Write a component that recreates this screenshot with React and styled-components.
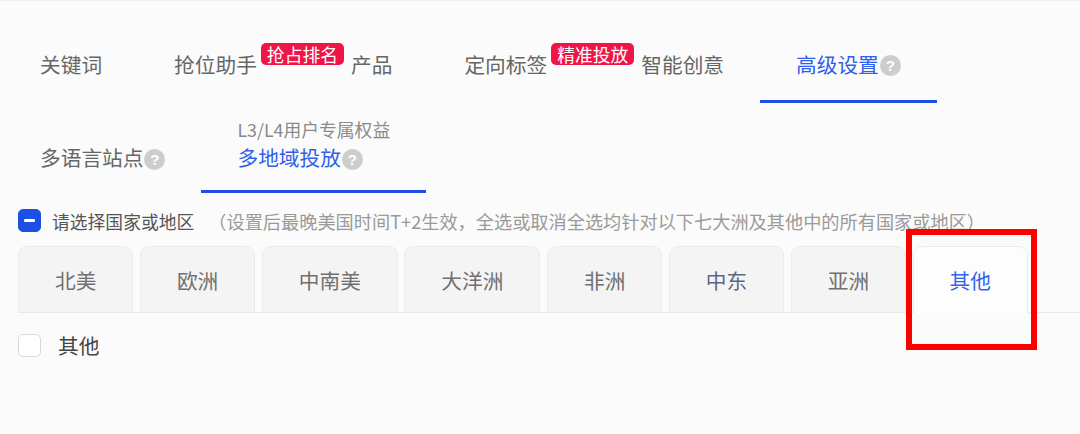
import styled, { createGlobalStyle } from 'styled-components';

const GlobalStyle = createGlobalStyle`
  body {
    margin: 0;
    background: #fbfbfb;
    font-family: "Noto Sans CJK SC", "Noto Sans", sans-serif;
  }
`;

const mainTabs = [
  { label: '关键词' },
  { label: '抢位助手', badge: '抢占排名', tail: '产品' },
  { label: '定向标签', badge: '精准投放', tail: '智能创意' },
  { label: '高级设置', help: true, active: true },
];

const regions = ['北美', '欧洲', '中南美', '大洋洲', '非洲', '中东', '亚洲', '其他'];

const Help = () => <HelpIcon>?</HelpIcon>;

const App = () => {
  return (
    <Page>
      <GlobalStyle />
      <TabBar>
        {mainTabs.map((t) => (
          <Tab key={t.label} $active={t.active}>
            {t.label}
            {t.badge && <Badge>{t.badge}</Badge>}
            {t.tail}
            {t.help && <Help />}
          </Tab>
        ))}
      </TabBar>
      <SubTabBar>
        <SubTab>
          <SubMain>
            多语言站点
            <Help />
          </SubMain>
        </SubTab>
        <SubTab $active>
          <SubLabel>L3/L4用户专属权益</SubLabel>
          <SubMain $active>
            多地域投放
            <Help />
          </SubMain>
        </SubTab>
      </SubTabBar>
      <Content>
        <CheckRow>
          <Checkbox $indeterminate>
            <Dash />
          </Checkbox>
          <CheckTitle>请选择国家或地区</CheckTitle>
          <Note>（设置后最晚美国时间T+2生效，全选或取消全选均针对以下七大洲及其他中的所有国家或地区）</Note>
        </CheckRow>
        <CardRow>
          {regions.map((r) => (
            <Card key={r} $active={r === '其他'} $hover={r === '中东'}>
              {r}
              {r === '其他' && <Highlight />}
            </Card>
          ))}
        </CardRow>
        <OptionRow>
          <Checkbox />
          <OptionText>其他</OptionText>
        </OptionRow>
      </Content>
    </Page>
  );
};

const Page = styled.div`
  min-height: 434px;
  box-sizing: border-box;
  border-top: 1px solid #efefef;
  padding-top: 30px;
`;

const TabBar = styled.div`
  display: flex;
  padding-left: 4px;
`;

const Tab = styled.div`
  display: flex;
  align-items: center;
  box-sizing: border-box;
  height: 72px;
  padding: 0 36px 4px;
  font-size: 20.7px;
  color: ${(p) => (p.$active ? '#2f5fec' : '#666')};
  border-bottom: 3px solid ${(p) => (p.$active ? '#1d4fe6' : 'transparent')};
`;

const Badge = styled.span`
  height: 22px;
  line-height: 22px;
  padding: 0 6px;
  margin: 0 7px 0 4px;
  border-radius: 5px;
  background: #ef1547;
  color: #fff;
  font-size: 17.8px;
  transform: translateY(-10px);
`;

const HelpIcon = styled.span`
  display: inline-flex;
  align-items: center;
  justify-content: center;
  width: 21px;
  height: 21px;
  margin-left: 1px;
  border-radius: 50%;
  background: #cdcdcd;
  color: #fff;
  font-family: "Liberation Sans", sans-serif;
  font-size: 15px;
  font-weight: 700;
  transform: translateY(2px);
`;

const SubTabBar = styled.div`
  display: flex;
  padding-left: 4px;
`;

const SubTab = styled.div`
  display: flex;
  flex-direction: column;
  justify-content: flex-end;
  height: 68px;
  padding: 0 36px 19px;
  border-bottom: 3px solid ${(p) => (p.$active ? '#1d4fe6' : 'transparent')};
`;

const SubLabel = styled.div`
  font-size: 17.8px;
  line-height: 22px;
  color: #8a8a8a;
  margin-bottom: 3px;
`;

const SubMain = styled.div`
  display: flex;
  align-items: center;
  height: 28px;
  font-size: 20.7px;
  color: ${(p) => (p.$active ? '#2f5fec' : '#666')};
`;

const Content = styled.div`
  padding-left: 18px;
`;

const CheckRow = styled.div`
  display: flex;
  align-items: center;
  margin-top: 16px;
  height: 23px;
`;

const Checkbox = styled.span`
  display: flex;
  align-items: center;
  justify-content: center;
  box-sizing: border-box;
  width: 23px;
  height: 23px;
  border-radius: 5px;
  background: ${(p) => (p.$indeterminate ? '#1c4fe3' : '#fff')};
  border: 1px solid ${(p) => (p.$indeterminate ? '#1c4fe3' : '#d9d9d9')};
`;

const Dash = styled.span`
  width: 11px;
  height: 3px;
  border-radius: 1px;
  background: #fff;
`;

const CheckTitle = styled.span`
  margin-left: 11px;
  font-size: 17.8px;
  color: #555;
`;

const Note = styled.span`
  margin-left: 14px;
  font-size: 18.2px;
  color: #9a9a9a;
  white-space: nowrap;
`;

const CardRow = styled.div`
  display: flex;
  gap: 6.5px;
  margin-top: 14px;
  border-bottom: 1px solid #e8e8e8;
`;

const Card = styled.div`
  position: relative;
  display: flex;
  align-items: center;
  height: 65px;
  padding: 0 36px;
  margin-bottom: -1px;
  font-size: 20.7px;
  color: ${(p) => (p.$active ? '#3263ee' : p.$hover ? '#5c6883' : '#707070')};
  background: ${(p) => (p.$active ? '#fdfdfd' : '#f4f4f4')};
  border: 1px solid #ebebeb;
  border-bottom: 1px solid ${(p) => (p.$active ? '#fdfdfd' : '#e8e8e8')};
  border-radius: 9px 9px 0 0;
`;

const Highlight = styled.span`
  position: absolute;
  top: -18px;
  left: -8px;
  right: -10px;
  bottom: -38px;
  border: 6px solid #ff0000;
  pointer-events: none;
`;

const OptionRow = styled.div`
  display: flex;
  align-items: center;
  margin-top: 17px;
`;

const OptionText = styled.span`
  margin-left: 17px;
  font-size: 20.7px;
  color: #444;
`;

export default App;
